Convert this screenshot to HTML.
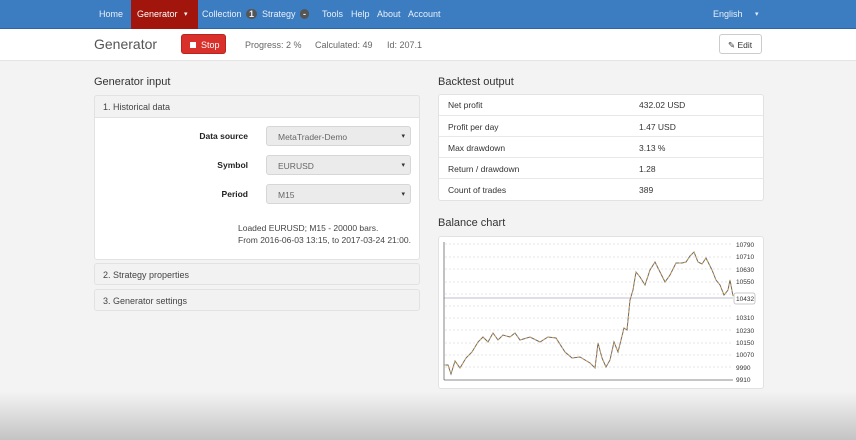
<!DOCTYPE html>
<html><head><meta charset="utf-8">
<style>
*{box-sizing:border-box;margin:0;padding:0}
body{width:856px;height:440px;overflow:hidden;background:#f3f3f3;font-family:"Liberation Sans",sans-serif;font-size:9px;color:#333;position:relative}
.nav{position:absolute;left:0;top:0;width:856px;height:29px;background:#3c7cc1;border-bottom:1px solid #2f66a3}
.nav span{position:absolute;top:9px;color:#e8f0fa;font-size:9px}
.act{position:absolute;left:131px;top:0;width:67px;height:29px;background:#a1150c}
.badge{display:inline-block;background:#555;color:#fff;border-radius:5px;padding:0 3px;font-size:7px;font-weight:bold;margin-left:2px}
.sub{position:absolute;left:0;top:29px;width:856px;height:32px;background:#fff;border-bottom:1px solid #e4e4e4}
.abs{position:absolute}
.h{font-size:11px;color:#333}
.panel{position:absolute;background:#fff;border:1px solid #e2e2e2;border-radius:3px}
.ph{position:absolute;background:#f2f2f2;border:1px solid #e2e2e2;border-radius:3px;font-size:9px;color:#444;padding:6px 8px}
.lab{position:absolute;font-weight:bold;font-size:8.5px;color:#222;text-align:right;width:100px}
.sel{position:absolute;left:266px;width:145px;height:20px;background:#ebebeb;border:1px solid #d6d6d6;border-radius:3px;font-size:8.5px;color:#666;padding:5px 0 0 11px}
.sel:after{content:"▾";position:absolute;right:5px;top:5px;font-size:7px;color:#333}
.tr{position:absolute;left:439px;width:324px;height:21px;border-top:1px solid #e8e8e8;font-size:8.5px}
.tr b{font-weight:normal;position:absolute;left:9px;top:6px}
.tr i{font-style:normal;position:absolute;left:200px;top:6px}
</style></head><body>
<div class="nav">
<div class="act"></div>
<span style="left:99px">Home</span>
<span style="left:137px;color:#fff">Generator</span>
<span style="left:184px;color:#fff;font-size:7px;top:10px">▾</span>
<span style="left:202px">Collection <span class="badge" style="position:static">1</span></span>
<span style="left:262px">Strategy <span class="badge" style="position:static">-</span></span>
<span style="left:322px">Tools</span>
<span style="left:351px">Help</span>
<span style="left:377px">About</span>
<span style="left:408px">Account</span>
<span style="left:713px">English</span>
<span style="left:755px;font-size:7px;top:10px">▾</span>
</div>
<div class="sub">
<div class="abs" style="left:94px;top:7px;font-size:14px;color:#555">Generator</div>
<div class="abs" style="left:181px;top:5px;width:45px;height:20px;background:#d9302b;border:1px solid #b8241f;border-radius:3px;color:#fff;font-size:9px;padding:5px 0 0 8px"><span style="display:inline-block;width:6px;height:6px;background:#fff;margin-right:5px"></span>Stop</div>
<div class="abs" style="left:245px;top:11px;color:#666">Progress: 2 %</div>
<div class="abs" style="left:315px;top:11px;color:#666">Calculated: 49</div>
<div class="abs" style="left:387px;top:11px;color:#666">Id: 207.1</div>
<div class="abs" style="left:719px;top:5px;width:43px;height:20px;border:1px solid #ccc;border-radius:3px;background:#fff;font-size:8.5px;padding:5px 0 0 8px">✎ Edit</div>
</div>
<div class="abs h" style="left:94px;top:76px">Generator input</div>
<div class="abs h" style="left:438px;top:76px">Backtest output</div>
<div class="panel" style="left:94px;top:95px;width:326px;height:165px"></div>
<div class="ph" style="left:94px;top:95px;width:326px;height:23px;border-radius:3px 3px 0 0">1. Historical data</div>
<div class="lab" style="left:148px;top:131px">Data source</div>
<div class="lab" style="left:148px;top:160px">Symbol</div>
<div class="lab" style="left:148px;top:189px">Period</div>
<div class="sel" style="top:126px">MetaTrader-Demo</div>
<div class="sel" style="top:155px">EURUSD</div>
<div class="sel" style="top:184px">M15</div>
<div class="abs" style="left:238px;top:222px;font-size:8.5px;line-height:12px;color:#444">Loaded EURUSD; M15 - 20000 bars.<br>From 2016-06-03 13:15, to 2017-03-24 21:00.</div>
<div class="ph" style="left:94px;top:263px;width:326px;height:22px">2. Strategy properties</div>
<div class="ph" style="left:94px;top:289px;width:326px;height:22px">3. Generator settings</div>
<div class="panel" style="left:438px;top:94px;width:326px;height:107px"></div>
<div class="tr" style="top:94px;border-top:none"><b>Net profit</b><i>432.02 USD</i></div>
<div class="tr" style="top:115px"><b>Profit per day</b><i>1.47 USD</i></div>
<div class="tr" style="top:136px"><b>Max drawdown</b><i>3.13 %</i></div>
<div class="tr" style="top:157px"><b>Return / drawdown</b><i>1.28</i></div>
<div class="tr" style="top:178px"><b>Count of trades</b><i>389</i></div>
<div class="abs h" style="left:438px;top:217px">Balance chart</div>
<div class="panel" style="left:438px;top:236px;width:326px;height:153px"></div>
<svg class="abs" style="left:0;top:0" width="856" height="440" font-family="Liberation Sans" font-size="6.5" fill="#333">
<g stroke="#ddd" stroke-width="0.8" stroke-dasharray="2,2">
<line x1="445" y1="244" x2="732" y2="244"/><line x1="445" y1="257" x2="732" y2="257"/><line x1="445" y1="269" x2="732" y2="269"/><line x1="445" y1="282" x2="732" y2="282"/><line x1="445" y1="294" x2="732" y2="294"/><line x1="445" y1="306" x2="732" y2="306"/><line x1="445" y1="318" x2="732" y2="318"/><line x1="445" y1="330" x2="732" y2="330"/><line x1="445" y1="343" x2="732" y2="343"/><line x1="445" y1="355" x2="732" y2="355"/><line x1="445" y1="367" x2="732" y2="367"/>
</g>
<line x1="444" y1="298" x2="733" y2="298" stroke="#ccd" stroke-width="1.2"/>
<line x1="444" y1="242" x2="444" y2="380" stroke="#666" stroke-width="0.8"/>
<line x1="444" y1="380" x2="733" y2="380" stroke="#666" stroke-width="0.8"/>
<polyline fill="none" stroke="#6a6a6a" stroke-width="1" points="444,365 448,365 451,374 455,361 460,368 466,358 472,352 478,342 483,337 488,342 493,333 498,340 503,335 510,337 515,333 520,340 530,337 540,342 548,337 556,338 565,352 572,358 580,357 590,363 595,368 598,343 602,358 606,367 610,360 614,342 618,352 621,340 624,328 627,330 630,300 633,290 636,272 640,277 645,285 650,270 655,262 660,272 665,282 670,275 676,263 682,263 686,262 690,256 694,252 698,262 702,264 706,258 712,270 716,280 720,285 724,295 728,290 730,280 733,296"/>
<polyline fill="none" stroke="#e5a040" stroke-width="0.8" stroke-dasharray="2,3" points="444,365 448,365 451,374 455,361 460,368 466,358 472,352 478,342 483,337 488,342 493,333 498,340 503,335 510,337 515,333 520,340 530,337 540,342 548,337 556,338 565,352 572,358 580,357 590,363 595,368 598,343 602,358 606,367 610,360 614,342 618,352 621,340 624,328 627,330 630,300 633,290 636,272 640,277 645,285 650,270 655,262 660,272 665,282 670,275 676,263 682,263 686,262 690,256 694,252 698,262 702,264 706,258 712,270 716,280 720,285 724,295 728,290 730,280 733,296"/>
<text x="736" y="247">10790</text><text x="736" y="259">10710</text><text x="736" y="272">10630</text><text x="736" y="284">10550</text><text x="736" y="320">10310</text><text x="736" y="333">10230</text><text x="736" y="345">10150</text><text x="736" y="357">10070</text><text x="736" y="370">9990</text><text x="736" y="382">9910</text>
<rect x="734" y="293" width="21" height="11" rx="2" fill="#fff" stroke="#bbb" stroke-width="0.8"/>
<text x="736" y="301">10432</text>
</svg>
<div class="abs" style="left:0;top:392px;width:856px;height:48px;background:linear-gradient(#f3f3f3,#c4c4c4)"></div>
</body></html>
